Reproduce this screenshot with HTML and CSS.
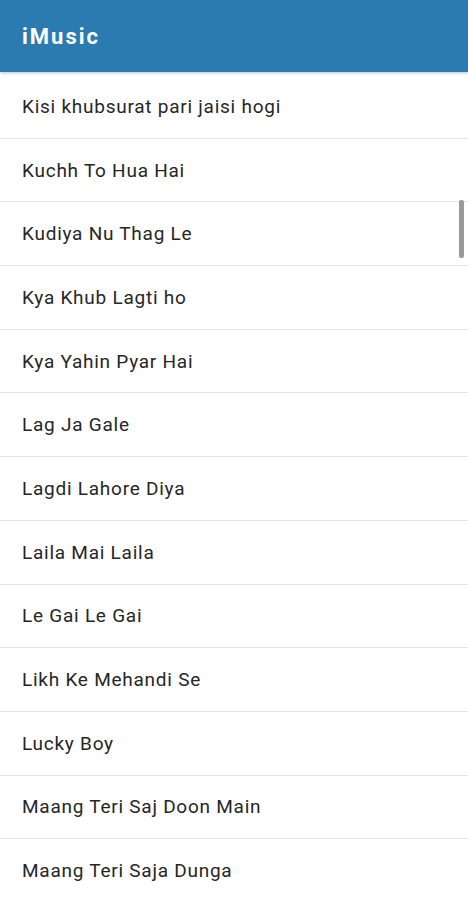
FILE: index.html
```html
<!DOCTYPE html>
<html lang="en">
<head>
    <meta charset="UTF-8">
    <meta name="viewport" content="width=device-width, initial-scale=1.0">
    <title>iMusic</title>
    <link rel="stylesheet" href="styles.css">
</head>
<body>
    <div class="app">
        <div class="toolbar">iMusic</div>
        <div class="list">
            <div class="song">Kisi khubsurat pari jaisi hogi</div>
            <div class="song">Kuchh To Hua Hai</div>
            <div class="song">Kudiya Nu Thag Le</div>
            <div class="song">Kya Khub Lagti ho</div>
            <div class="song">Kya Yahin Pyar Hai</div>
            <div class="song">Lag Ja Gale</div>
            <div class="song">Lagdi Lahore Diya</div>
            <div class="song">Laila Mai Laila</div>
            <div class="song">Le Gai Le Gai</div>
            <div class="song">Likh Ke Mehandi Se</div>
            <div class="song">Lucky Boy</div>
            <div class="song">Maang Teri Saj Doon Main</div>
            <div class="song">Maang Teri Saja Dunga</div>
        </div>
        <div class="scrollbar"></div>
    </div>
</body>
</html>
```

FILE: styles.css
```css
body {
    margin: 0;
    font-family: Roboto, "Noto Sans", sans-serif;
    background-color: #ffffff;
}
.app {
    position: relative;
    width: 468px;
    height: 900px;
    overflow: hidden;
}
.toolbar {
    height: 72px;
    display: flex;
    align-items: center;
    padding-left: 22px;
    background-color: #2b7bb0;
    color: #ffffff;
    font-size: 22px;
    font-weight: 700;
    letter-spacing: 2px;
    box-shadow: 0 1px 3px rgba(0, 0, 0, 0.25);
    position: relative;
    z-index: 1;
}
.list {
    padding-top: 3px;
}
.song {
    height: 62.7px;
    display: flex;
    align-items: center;
    padding-left: 22px;
    font-size: 19px;
    letter-spacing: 0.75px;
    color: #262626;
    border-bottom: 1px solid #e4e4e4;
}
.scrollbar {
    position: absolute;
    left: 459px;
    top: 200px;
    width: 5px;
    height: 58px;
    border-radius: 2px;
    background-color: #9a9a9a;
}
```
